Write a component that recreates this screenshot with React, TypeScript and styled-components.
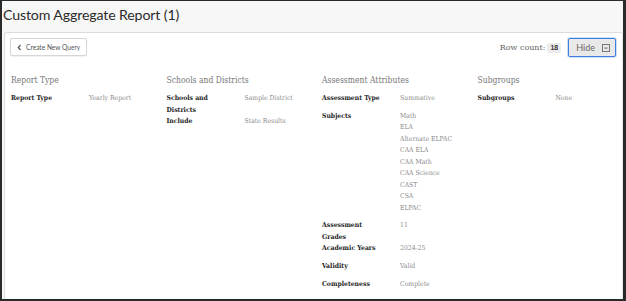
import React from "react";
import styled, { createGlobalStyle } from "styled-components";

const Global = createGlobalStyle`
  html, body { margin: 0; padding: 0; background: #fff; }
  body { font-family: "Lato", "Liberation Sans", sans-serif; }
  * { box-sizing: border-box; }
`;

const Frame = styled.div`
  width: 626px;
  height: 301px;
  border-style: solid;
  border-color: #2a2a2a;
  border-width: 1px 3px 2px 2px;
  background: #f7f7f7;
  display: flex;
  flex-direction: column;
  overflow: hidden;
`;

const Header = styled.div`
  height: 31px;
  padding: 4px 0 0 1px;
  flex-shrink: 0;
`;

const Title = styled.h1`
  margin: 0;
  font-family: "Lato", sans-serif;
  font-weight: 400;
  font-size: 14.2px;
  letter-spacing: -0.15px;
  line-height: 20px;
  color: #2b2b2b;
`;

const Card = styled.div`
  flex: 1;
  margin-left: 2px;
  background: #fff;
  border: 1px solid #dcdcdc;
  border-bottom: none;
  border-right-color: #e6e6e6;
  border-radius: 3px 3px 0 0;
  padding: 4px 6px 0 5px;
`;

const Toolbar = styled.div`
  display: flex;
  align-items: center;
  justify-content: space-between;
  height: 20px;
`;

const BackButton = styled.button`
  display: flex;
  align-items: center;
  gap: 4px;
  height: 18px;
  padding: 0 6px 0 6px;
  background: #fff;
  border: 1px solid #d6d6d6;
  border-radius: 2px;
  box-shadow: 0 1px 1px rgba(0, 0, 0, 0.06);
  font-family: "Lato", sans-serif;
  font-size: 6.6px;
  color: #555;
  cursor: pointer;
`;

const RightTools = styled.div`
  display: flex;
  align-items: center;
  gap: 7px;
  margin-top: 1px;
`;

const RowCount = styled.div`
  display: flex;
  align-items: center;
  gap: 2px;
  font-family: "DejaVu Serif", serif;
  font-size: 8px;
  color: #666;
`;

const Badge = styled.span`
  display: inline-block;
  background: #ececec;
  border-radius: 2px;
  padding: 1px 3px;
  font-family: "Liberation Sans", sans-serif;
  font-weight: 700;
  font-size: 7px;
  line-height: 8px;
  color: #333;
`;

const HideButton = styled.button`
  display: flex;
  align-items: center;
  gap: 7px;
  height: 19px;
  padding: 0 5px 0 7px;
  background: #e9e9e9;
  border: 1.5px solid #3d7ee0;
  border-radius: 2px;
  box-shadow: 0 0 0 1px rgba(61, 126, 224, 0.25);
  font-family: "Lato", sans-serif;
  font-size: 9px;
  color: #666;
  cursor: pointer;
`;

const Columns = styled.div`
  display: grid;
  grid-template-columns: repeat(4, 155.5px);
  margin-top: 17px;
  margin-left: 1px;
`;

const Column = styled.section``;

const Heading = styled.h2`
  margin: 0 0 7px;
  font-family: "DejaVu Serif", serif;
  font-stretch: semi-condensed;
  font-weight: 400;
  font-size: 8.5px;
  line-height: 12px;
  color: #777;
`;

const Row = styled.div`
  display: grid;
  grid-template-columns: 78px 1fr;
  min-height: 17.8px;
  font-family: "DejaVu Serif", serif;
  font-stretch: semi-condensed;
  font-size: 6.8px;
  line-height: 11.5px;
`;

const Label = styled.div`
  font-weight: 700;
  color: #1f1f1f;
  padding-right: 14px;
`;

const Value = styled.div`
  color: #8a8a8a;
`;

const ValueList = styled.div`
  color: #8a8a8a;
  padding-bottom: 6px;
`;

type Item = { label: string; value: string | string[] };
type Group = { title: string; items: Item[] };

const groups: Group[] = [
  { title: "Report Type", items: [{ label: "Report Type", value: "Yearly Report" }] },
  {
    title: "Schools and Districts",
    items: [
      { label: "Schools and Districts", value: "Sample District" },
      { label: "Include", value: "State Results" },
    ],
  },
  {
    title: "Assessment Attributes",
    items: [
      { label: "Assessment Type", value: "Summative" },
      {
        label: "Subjects",
        value: ["Math", "ELA", "Alternate ELPAC", "CAA ELA", "CAA Math", "CAA Science", "CAST", "CSA", "ELPAC"],
      },
      { label: "Assessment Grades", value: "11" },
      { label: "Academic Years", value: "2024-25" },
      { label: "Validity", value: "Valid" },
      { label: "Completeness", value: "Complete" },
    ],
  },
  { title: "Subgroups", items: [{ label: "Subgroups", value: "None" }] },
];

const ChevronLeft = () => (
  <svg width="5" height="7" viewBox="0 0 5 7" fill="none">
    <path d="M3.6 1 L1.2 3.5 L3.6 6" stroke="#555" strokeWidth="1.1" />
  </svg>
);

const CollapseIcon = () => (
  <svg width="8" height="8" viewBox="0 0 8 8" fill="none">
    <rect x="0.5" y="0.5" width="7" height="7" stroke="#777" strokeWidth="1" />
    <rect x="2.5" y="3.5" width="3" height="1.2" fill="#777" />
  </svg>
);

export default function App() {
  return (
    <>
      <Global />
      <Frame>
        <Header>
          <Title>Custom Aggregate Report (1)</Title>
        </Header>
        <Card>
          <Toolbar>
            <BackButton>
              <ChevronLeft />
              Create New Query
            </BackButton>
            <RightTools>
              <RowCount>
                Row count: <Badge>18</Badge>
              </RowCount>
              <HideButton>
                Hide
                <CollapseIcon />
              </HideButton>
            </RightTools>
          </Toolbar>
          <Columns>
            {groups.map((g) => (
              <Column key={g.title}>
                <Heading>{g.title}</Heading>
                {g.items.map((it) => (
                  <Row key={it.label}>
                    <Label>{it.label}</Label>
                    {Array.isArray(it.value) ? (
                      <ValueList>
                        {it.value.map((v) => (
                          <div key={v}>{v}</div>
                        ))}
                      </ValueList>
                    ) : (
                      <Value>{it.value}</Value>
                    )}
                  </Row>
                ))}
              </Column>
            ))}
          </Columns>
        </Card>
      </Frame>
    </>
  );
}
